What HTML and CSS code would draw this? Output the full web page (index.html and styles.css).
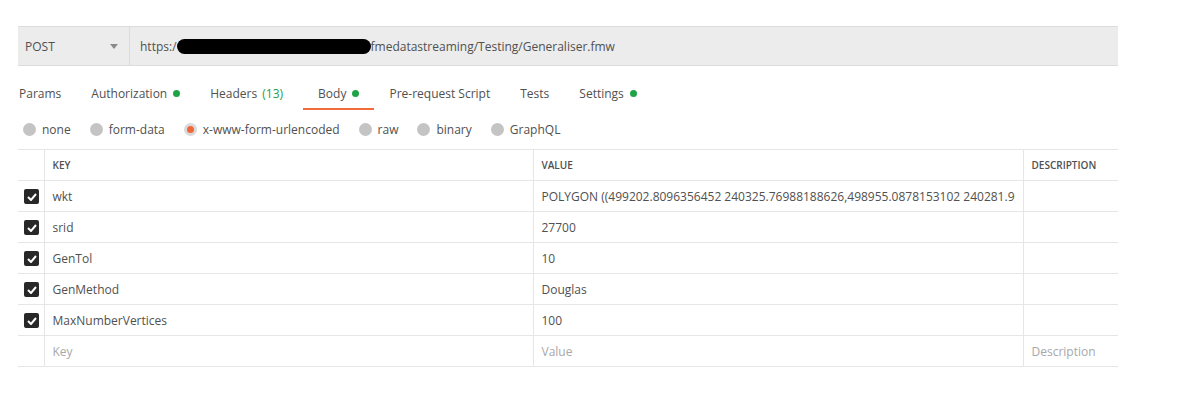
FILE: index.html
```html
<!DOCTYPE html>
<html>
	<head>
		<meta charset="utf-8" />
		<title>Generaliser</title>
		<link rel="stylesheet" href="styles.css">
	</head>
	<body>
		<div class="url-bar">
			<div class="method">
				<span>POST</span>
				<svg class="caret" width="8" height="5" viewBox="0 0 8 5"><path d="M0 0 L8 0 L4 5 Z" fill="#8a8a8a"/></svg>
			</div>
			<div class="url">https:/<span class="redact"></span>fmedatastreaming/Testing/Generaliser.fmw</div>
		</div>

		<div class="tabs">
			<div class="tab">Params</div>
			<div class="tab">Authorization<span class="dot"></span></div>
			<div class="tab">Headers <span class="count">(13)</span></div>
			<div class="tab active">Body<span class="dot"></span></div>
			<div class="tab">Pre-request Script</div>
			<div class="tab">Tests</div>
			<div class="tab">Settings<span class="dot"></span></div>
		</div>

		<div class="modes">
			<label class="mode"><span class="radio"></span>none</label>
			<label class="mode"><span class="radio"></span>form-data</label>
			<label class="mode"><span class="radio on"></span>x-www-form-urlencoded</label>
			<label class="mode"><span class="radio"></span>raw</label>
			<label class="mode"><span class="radio"></span>binary</label>
			<label class="mode"><span class="radio"></span>GraphQL</label>
		</div>

		<table class="params">
			<colgroup>
				<col class="check-w">
				<col class="key-w">
				<col class="value-w">
				<col class="desc-w">
			</colgroup>
			<tr class="head">
				<th class="check-col"></th>
				<th>KEY</th>
				<th>VALUE</th>
				<th>DESCRIPTION</th>
			</tr>
			<tr>
				<td class="check-col"><span class="check"><svg width="10" height="8" viewBox="0 0 10 8"><path d="M1 4 L4 7 L9 1" stroke="#fff" stroke-width="2" fill="none"/></svg></span></td>
				<td>wkt</td>
				<td><div class="clip">POLYGON ((499202.8096356452 240325.76988188626,498955.0878153102 240281.9613345 240200.1</div></td>
				<td></td>
			</tr>
			<tr>
				<td class="check-col"><span class="check"><svg width="10" height="8" viewBox="0 0 10 8"><path d="M1 4 L4 7 L9 1" stroke="#fff" stroke-width="2" fill="none"/></svg></span></td>
				<td>srid</td>
				<td>27700</td>
				<td></td>
			</tr>
			<tr>
				<td class="check-col"><span class="check"><svg width="10" height="8" viewBox="0 0 10 8"><path d="M1 4 L4 7 L9 1" stroke="#fff" stroke-width="2" fill="none"/></svg></span></td>
				<td>GenTol</td>
				<td>10</td>
				<td></td>
			</tr>
			<tr>
				<td class="check-col"><span class="check"><svg width="10" height="8" viewBox="0 0 10 8"><path d="M1 4 L4 7 L9 1" stroke="#fff" stroke-width="2" fill="none"/></svg></span></td>
				<td>GenMethod</td>
				<td>Douglas</td>
				<td></td>
			</tr>
			<tr>
				<td class="check-col"><span class="check"><svg width="10" height="8" viewBox="0 0 10 8"><path d="M1 4 L4 7 L9 1" stroke="#fff" stroke-width="2" fill="none"/></svg></span></td>
				<td>MaxNumberVertices</td>
				<td>100</td>
				<td></td>
			</tr>
			<tr class="placeholder">
				<td class="check-col"></td>
				<td>Key</td>
				<td>Value</td>
				<td>Description</td>
			</tr>
		</table>
	</body>
</html>
```

FILE: styles.css
```css
body {
	margin: 0px;
	padding: 26px 0px 0px 18px;
	font-family: "Open Sans", "Noto Sans", sans-serif;
	font-size: 12px;
	color: #505050;
	background-color: white;
}

.url-bar {
	display: flex;
	width: 1100px;
	height: 38px;
	background-color: #ececec;
	border-top: 1px solid #dcdcdc;
	border-bottom: 1px solid #dcdcdc;
}

.method {
	display: flex;
	align-items: center;
	justify-content: space-between;
	width: 97px;
	padding: 0px 7px;
	border-right: 1px solid #dcdcdc;
	font-size: 12px;
}

.caret {
	margin-right: 4px;
}

.url {
	display: flex;
	align-items: center;
	padding-left: 10px;
	font-size: 12px;
}

.redact {
	display: inline-block;
	width: 194px;
	height: 15px;
	background-color: black;
	border-radius: 8px;
}

.tabs {
	display: flex;
	margin-left: -14px;
	margin-top: 15px;
	height: 27px;
}

.tab {
	display: flex;
	align-items: flex-start;
	padding: 4px 15px 0px 15px;
	height: 23px;
	white-space: pre;
}

.tab.active {
	border-bottom: 2px solid #f26b3a;
	height: 23px;
}

.dot {
	display: inline-block;
	width: 7px;
	height: 7px;
	border-radius: 50%;
	background-color: #1ea446;
	margin-top: 5px;
	margin-left: 6px;
}

.count {
	color: #1e9e4c;
	margin-left: 2px;
	margin-right: 5px;
}

.modes {
	display: flex;
	align-items: center;
	height: 18px;
	margin-top: 12px;
	margin-left: 5px;
}

.mode {
	display: flex;
	align-items: center;
	margin-right: 19px;
}

.radio {
	display: inline-block;
	box-sizing: border-box;
	width: 13px;
	height: 13px;
	border-radius: 50%;
	background-color: #c4c4c4;
	margin-right: 6px;
}

.radio.on {
	background-color: #f0683a;
	border: 3px solid #dadada;
}

.params {
	margin-top: 11px;
	width: 1100px;
	border-collapse: collapse;
	table-layout: fixed;
	border-top: 1px solid #e6e6e6;
}

.check-w {
	width: 26px;
}

.key-w {
	width: 489px;
}

.value-w {
	width: 490px;
}

.desc-w {
	width: 95px;
}

.params td, .params th {
	height: 30px;
	padding: 0px 8px;
	border-bottom: 1px solid #e6e6e6;
	border-left: 1px solid #e6e6e6;
	text-align: left;
	white-space: nowrap;
	overflow: hidden;
}

.params th {
	font-size: 10px;
	font-weight: 600;
	color: #505050;
}

.params .check-col {
	border-left: none;
	padding: 0px 0px 0px 6px;
}

.clip {
	overflow: hidden;
}

.check {
	display: flex;
	align-items: center;
	justify-content: center;
	width: 15px;
	height: 15px;
	border-radius: 2px;
	background-color: #282828;
	margin-top: 1px;
}

.placeholder td {
	color: #a8a8a8;
}
```
